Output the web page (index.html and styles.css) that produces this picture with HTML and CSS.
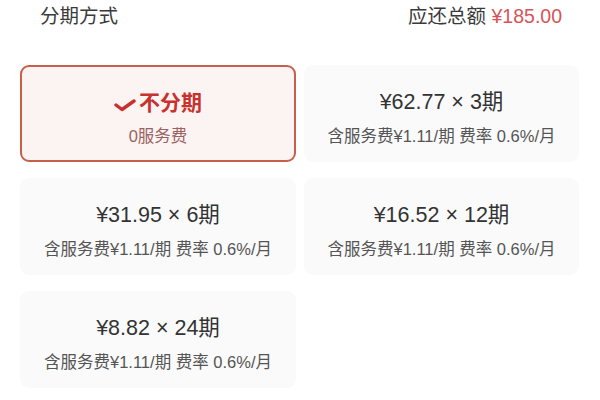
FILE: index.html
```html
<!DOCTYPE html>
<html lang="zh">
<head>
<meta charset="utf-8">
<link rel="stylesheet" href="styles.css">
</head>
<body>
<div class="page">
  <div class="header">
    <span class="label">分期方式</span>
    <span class="total">应还总额 <span class="amount">¥185.00</span></span>
  </div>
  <div class="grid">
    <div class="card selected">
      <div class="title"><svg class="check" viewBox="0 0 22 14" width="22" height="14"><path d="M2 7 L8 11.5 L20 3" fill="none" stroke="#c8322e" stroke-width="3.4" stroke-linecap="round" stroke-linejoin="round"/></svg><span>不分期</span></div>
      <div class="sub">0服务费</div>
    </div>
    <div class="card">
      <div class="title">¥62.77 × 3期</div>
      <div class="sub">含服务费¥1.11/期 费率 0.6%/月</div>
    </div>
    <div class="card">
      <div class="title">¥31.95 × 6期</div>
      <div class="sub">含服务费¥1.11/期 费率 0.6%/月</div>
    </div>
    <div class="card">
      <div class="title">¥16.52 × 12期</div>
      <div class="sub">含服务费¥1.11/期 费率 0.6%/月</div>
    </div>
    <div class="card">
      <div class="title">¥8.82 × 24期</div>
      <div class="sub">含服务费¥1.11/期 费率 0.6%/月</div>
    </div>
  </div>
</div>
</body>
</html>
```
FILE: styles.css
```css
html, body {
  margin: 0;
  padding: 0;
  background: #ffffff;
}
body {
  font-family: "Liberation Sans", "Noto Sans CJK SC", sans-serif;
  color: #333333;
}
.page {
  width: 600px;
  height: 400px;
  overflow: hidden;
}
.header {
  display: flex;
  justify-content: space-between;
  align-items: center;
  height: 28px;
  padding: 0 38px 0 40px;
  font-size: 19.5px;
  color: #3a3a3a;
}
.amount {
  color: #d4545a;
}
.grid {
  display: grid;
  grid-template-columns: 276px 275px;
  column-gap: 8px;
  row-gap: 16px;
  padding: 0 20px 0 20px;
  margin-top: 37px;
}
.card {
  box-sizing: border-box;
  height: 97px;
  background: #fafafa;
  border-radius: 9px;
  display: flex;
  flex-direction: column;
  align-items: center;
  justify-content: flex-start;
  padding-top: 25px;
  gap: 11px;
}
.card.selected {
  background: #fbf4f2;
  border: 2px solid #c85f4a;
  padding-top: 23px;
}
.title {
  font-size: 21.5px;
  line-height: 25px;
  color: #333333;
  display: flex;
  align-items: center;
}
.selected .title {
  font-size: 21px;
  font-weight: bold;
  color: #c8322e;
}
.check {
  margin-right: 3px;
  margin-top: 4px;
}
.sub {
  font-size: 16.5px;
  line-height: 20px;
  color: #555555;
}
.selected .sub {
  color: #9b6262;
  font-size: 16.5px;
}
```
